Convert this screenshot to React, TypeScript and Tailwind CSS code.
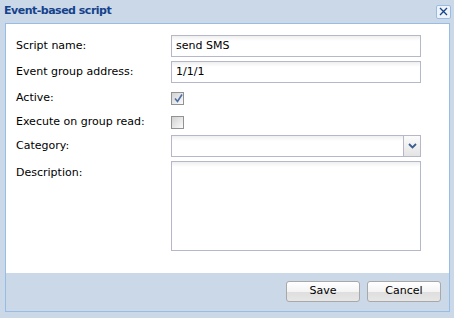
import React from 'react';

const font = { fontFamily: '"DejaVu Sans", Verdana, sans-serif' };

function TextField({ value }: { value?: string }) {
  return (
    <div className="h-[22px] w-[250px] border border-[#b5b8c8] bg-[linear-gradient(to_bottom,#efefef_0px,#ffffff_5px)] px-[4px] flex items-center text-[11px] text-black">
      {value}
    </div>
  );
}

function Checkbox({ checked }: { checked?: boolean }) {
  return (
    <div className="relative h-[13px] w-[13px] border border-[#929292] bg-[linear-gradient(to_bottom_right,#d2d2d2,#fbfbfb)]">
      {checked && (
        <svg className="absolute left-[1px] top-[0px]" width="11" height="11" viewBox="0 0 11 11">
          <path d="M2 5.5 L4.5 8.5 L9 1.5" fill="none" stroke="#4b6ea8" strokeWidth="1.6" />
        </svg>
      )}
    </div>
  );
}

function Row({ label, h, children }: { label: string; h: string; children: React.ReactNode }) {
  return (
    <div className={`flex items-center ${h}`}>
      <div className="w-[155px] shrink-0 text-[11px] text-black">{label}</div>
      {children}
    </div>
  );
}

export default function App() {
  return (
    <div className="w-[454px] h-[318px] bg-[#cbd8e8] flex flex-col" style={font}>
      {/* header */}
      <div className="h-[23px] flex items-center justify-between pl-[4px] pr-[3px]">
        <span className="text-[11px] font-bold text-[#15428b] tracking-[-0.5px]">Event-based script</span>
        <div className="h-[14px] w-[15px] rounded-[2px] border border-[#99bbe8] bg-[#eef3fa] flex items-center justify-center">
          <svg width="9" height="9" viewBox="0 0 9 9">
            <path d="M1 1 L8 8 M8 1 L1 8" stroke="#15428b" strokeWidth="1.3" />
          </svg>
        </div>
      </div>

      {/* body */}
      <div className="mx-[5px] w-[445px] h-[289px] border border-[#99bbe8] flex flex-col">
        <div className="bg-white h-[249px] pl-[10px] pt-[11px] flex flex-col">
          <Row label="Script name:" h="h-[22px]">
            <TextField value="send SMS" />
          </Row>
          <div className="h-[4px]" />
          <Row label="Event group address:" h="h-[22px]">
            <TextField value="1/1/1" />
          </Row>
          <div className="h-[4px]" />
          <Row label="Active:" h="h-[22px]">
            <Checkbox checked />
          </Row>
          <div className="h-[4px]" />
          <Row label="Execute on group read:" h="h-[18px]">
            <Checkbox />
          </Row>
          <div className="h-[4px]" />
          <Row label="Category:" h="h-[22px]">
            <div className="h-[22px] w-[250px] border border-[#b5b8c8] flex">
              <div className="flex-1 bg-[linear-gradient(to_bottom,#efefef_0px,#ffffff_5px)]" />
              <div className="w-[17px] border-l border-[#b5b8c8] bg-[linear-gradient(to_bottom,#fbfbfb,#e4e4e4)] flex items-center justify-center">
                <svg width="9" height="6" viewBox="0 0 9 6">
                  <path d="M1 1 L4.5 4.5 L8 1" fill="none" stroke="#3b5e91" strokeWidth="1.8" />
                </svg>
              </div>
            </div>
          </Row>
          <div className="h-[4px]" />
          <div className="flex">
            <div className="w-[155px] shrink-0 text-[11px] text-black pt-[4px]">Description:</div>
            <div className="h-[90px] w-[250px] border border-[#b5b8c8] bg-[linear-gradient(to_bottom,#efefef_0px,#ffffff_5px)]" />
          </div>
        </div>

        {/* footer */}
        <div className="flex-1 flex justify-end items-start pt-[8px] pr-[8px] gap-[7px]">
          {['Save', 'Cancel'].map((t) => (
            <button
              key={t}
              className="h-[21px] w-[74px] rounded-[3px] border border-[#a8a8a8] bg-[linear-gradient(to_bottom,#ffffff_0%,#f4f4f4_50%,#dedede_51%,#e6e6e6_100%)] text-[11px] text-black flex items-center justify-center"
            >
              {t}
            </button>
          ))}
        </div>
      </div>
    </div>
  );
}
